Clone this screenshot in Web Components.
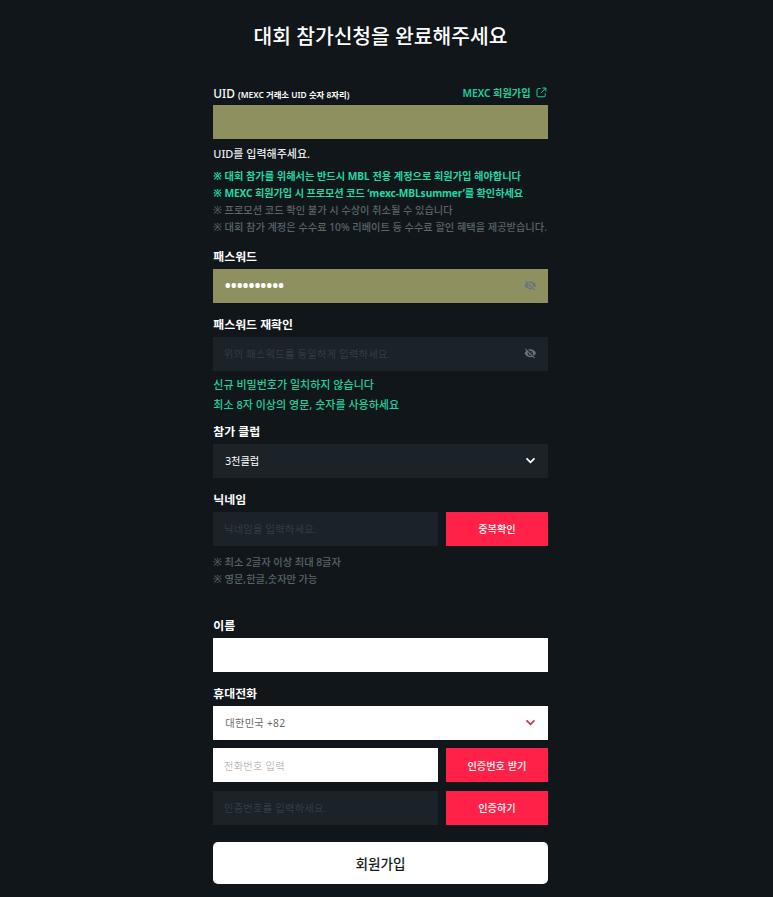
<!DOCTYPE html>
<html lang="ko">
<head>
<meta charset="utf-8">
<title>대회 참가신청</title>
<style>
    body {
        margin: 0;
        height: 897px;
        overflow: hidden;
        background: #10161a;
        color: #fff;
        font-family: "Noto Sans", "Noto Sans CJK KR", sans-serif;
    }
</style>
</head>
<body>
<signup-page></signup-page>

<script>
const ICONS = {
    external: `<svg width="11" height="11" viewBox="0 0 11 11" fill="none" stroke="currentColor" stroke-width="1"><path d="M4.6 1.6H2.2Q1 1.6 1 2.8V8.6Q1 9.8 2.2 9.8H8Q9.2 9.8 9.2 8.6V6.4M6.4 1H9.9V4.5M9.8 1.1L5 5.9"/></svg>`,
    eyeOff: `<svg width="12.5" height="12.5" viewBox="0 0 24 24" fill="currentColor"><path d="M12 7c2.76 0 5 2.24 5 5 0 .65-.13 1.26-.36 1.83l2.92 2.92c1.51-1.26 2.7-2.89 3.43-4.75-1.73-4.39-6-7.5-11-7.5-1.4 0-2.74.25-3.98.7l2.16 2.16C10.74 7.13 11.35 7 12 7zM2 4.27l2.28 2.28.46.46C3.08 8.3 1.78 10.02 1 12c1.73 4.39 6 7.5 11 7.5 1.55 0 3.03-.3 4.38-.84l.42.42L19.73 22 21 20.73 3.27 3 2 4.27zM7.53 9.8l1.55 1.55c-.05.21-.08.43-.08.65 0 1.66 1.34 3 3 3 .22 0 .44-.03.65-.08l1.55 1.55c-.67.33-1.41.53-2.2.53-2.76 0-5-2.24-5-5 0-.79.2-1.53.53-2.2zm4.31-.78l3.15 3.15.02-.16c0-1.66-1.34-3-3-3l-.17.01z"/></svg>`,
    chevron: `<svg width="11" height="11" viewBox="0 0 11 11" fill="none" stroke="currentColor" stroke-width="1.7"><path d="M1.5 3.4L5.5 7.4L9.5 3.4"/></svg>`
};

class FormField extends HTMLElement {
    constructor() {
        super();
        this.attachShadow({ mode: 'open' });
    }

    connectedCallback() {
        this.shadowRoot.innerHTML = `
            <style>
                :host { display: block; }
                .label {
                    display: flex;
                    align-items: center;
                    justify-content: space-between;
                    box-sizing: border-box;
                    height: 24px;
                    padding-bottom: 2px;
                    font-size: 11.9px;
                    font-weight: 700;
                    white-space: nowrap;
                }
                :host([latin]) .label { font-weight: 500; padding-bottom: 1px; }
                .rows {
                    display: flex;
                    flex-direction: column;
                    gap: 8.5px;
                }
            </style>
            <div class="label"><span>${this.getAttribute('label')}<slot name="hint"></slot></span><slot name="link"></slot></div>
            <div class="rows"><slot></slot></div>
        `;
    }
}

class InputBox extends HTMLElement {
    constructor() {
        super();
        this.attachShadow({ mode: 'open' });
    }

    connectedCallback() {
        const icon = this.getAttribute('icon');
        this.shadowRoot.innerHTML = `
            <style>
                :host {
                    display: flex;
                    flex: 1 0 34px;
                    align-items: center;
                    justify-content: space-between;
                    box-sizing: border-box;
                    min-height: 34px;
                    padding: 0 11.3px 0 12px;
                    background: #1b2329;
                    font-size: 10.2px;
                    white-space: nowrap;
                }
                :host([theme="filled"]) { background: #8e905f; }
                :host([theme="light"]) { background: #fff; color: #686868; letter-spacing: .3px; }
                :host([placeholder]) { color: #414a50; padding-left: 10.7px; font-weight: 300; letter-spacing: .3px; }
                :host([theme="light"][placeholder]) { color: #a0a0a0; }
                :host([masked]) {
                    height: 34px;
                    padding-left: 10.8px;
                    font-size: 20px;
                    line-height: 34px;
                    letter-spacing: -1.6px;
                }
                .icon { display: flex; color: #69747b; }
                :host([icon="chevron"]) .icon { color: #fff; }
                :host([icon="chevron"][theme="light"]) .icon { color: #d62c4c; }
            </style>
            <span class="value"><slot></slot></span>
            ${icon ? `<span class="icon">${ICONS[icon]}</span>` : ''}
        `;
    }
}

class InputRow extends HTMLElement {
    constructor() {
        super();
        this.attachShadow({ mode: 'open' });
    }

    connectedCallback() {
        this.shadowRoot.innerHTML = `
            <style>
                :host {
                    display: grid;
                    grid-template-columns: 1fr 101.3px;
                    column-gap: 8.4px;
                    height: 34px;
                }
            </style>
            <slot></slot>
        `;
    }
}

class ActionButton extends HTMLElement {
    constructor() {
        super();
        this.attachShadow({ mode: 'open' });
    }

    connectedCallback() {
        this.shadowRoot.innerHTML = `
            <style>
                :host { display: block; height: 34px; }
                :host([primary]) { height: 42.5px; }
                button {
                    display: block;
                    width: 100%;
                    height: 100%;
                    padding: 0;
                    border: none;
                    background: #ff2147;
                    color: #fff;
                    font: 500 10.2px "Noto Sans", "Noto Sans CJK KR", sans-serif;
                    cursor: pointer;
                }
                :host([primary]) button {
                    border-radius: 5px;
                    background: #fff;
                    color: #14191c;
                    font-size: 13.6px;
                }
            </style>
            <button type="button"><slot></slot></button>
        `;
    }
}

class NoteLine extends HTMLElement {
    constructor() {
        super();
        this.attachShadow({ mode: 'open' });
    }

    connectedCallback() {
        this.shadowRoot.innerHTML = `
            <style>
                :host {
                    display: block;
                    height: 17px;
                    line-height: 17px;
                    font-size: 10.22px;
                    font-weight: 500;
                    color: #5a646b;
                    white-space: nowrap;
                }
                :host([strong]) { color: #20d9a4; font-weight: 700; font-size: 10.2px; }
                :host([narrow]) { letter-spacing: -.1px; }
                :host([error]) {
                    height: 20px;
                    line-height: 20px;
                    font-size: 11.02px;
                    color: #20cf9d;
                }
                :host([message]) {
                    height: 20px;
                    line-height: 20px;
                    font-size: 11px;
                    color: #e9ebec;
                }
            </style>
            <slot></slot>
        `;
    }
}

class SignupPage extends HTMLElement {
    constructor() {
        super();
        this.attachShadow({ mode: 'open' });
    }

    getStyles() {
        return `
            <style>
                :host {
                    display: block;
                    box-sizing: border-box;
                    width: 547.6px;
                    padding: 21px 0 0 213.3px;
                }
                h1 {
                    margin: 0 0 30px;
                    font-size: 20.35px;
                    font-weight: 500;
                    line-height: 30px;
                    text-align: center;
                    white-space: nowrap;
                }
                .hint { font-size: 8.4px; font-weight: 600; }
                .link {
                    display: flex;
                    align-items: center;
                    gap: 5px;
                    padding: 0 1px 1px 0;
                    font-size: 10.2px;
                    font-weight: 600;
                    color: #20cf9d;
                }
                .message { padding-top: 5px; }
                .notes { padding: 3.5px 0 9px; }
                .errors { padding: 4.5px 0 4.5px; }
                .rules { padding: 8.5px 0 25.8px; }
                .gap { margin-bottom: 10px; }
                .submit { margin-top: 17px; }
            </style>
        `;
    }

    connectedCallback() {
        this.shadowRoot.innerHTML = `
            ${this.getStyles()}
            <h1>대회 참가신청을 완료해주세요</h1>

            <form-field label="UID " latin>
                <span slot="hint" class="hint">(MEXC 거래소 UID 숫자 8자리)</span>
                <span slot="link" class="link">MEXC 회원가입 ${ICONS.external}</span>
                <input-box theme="filled"></input-box>
            </form-field>
            <note-line message class="message">UID를 입력해주세요.</note-line>
            <div class="notes">
                <note-line strong>※ 대회 참가를 위해서는 반드시 MBL 전용 계정으로 회원가입 해야합니다</note-line>
                <note-line strong narrow>※ MEXC 회원가입 시 프로모션 코드 ‘mexc-MBLsummer’를 확인하세요</note-line>
                <note-line>※ 프로모션 코드 확인 불가 시 수상이 취소될 수 있습니다</note-line>
                <note-line>※ 대회 참가 계정은 수수료 10% 리베이트 등 수수료 할인 혜택을 제공받습니다.</note-line>
            </div>

            <form-field label="패스워드" class="gap">
                <input-box theme="filled" icon="eyeOff" masked>••••••••••</input-box>
            </form-field>

            <form-field label="패스워드 재확인">
                <input-box placeholder icon="eyeOff">위의 패스워드를 동일하게 입력하세요.</input-box>
            </form-field>
            <div class="errors">
                <note-line error>신규 비밀번호가 일치하지 않습니다</note-line>
                <note-line error>최소 8자 이상의 영문, 숫자를 사용하세요</note-line>
            </div>

            <form-field label="참가 클럽" class="gap">
                <input-box icon="chevron">3천클럽</input-box>
            </form-field>

            <form-field label="닉네임">
                <input-row>
                    <input-box placeholder>닉네임을 입력하세요.</input-box>
                    <action-button>중복확인</action-button>
                </input-row>
            </form-field>
            <div class="rules">
                <note-line>※ 최소 2글자 이상 최대 8글자</note-line>
                <note-line>※ 영문,한글,숫자만 가능</note-line>
            </div>

            <form-field label="이름" class="gap">
                <input-box theme="light"></input-box>
            </form-field>

            <form-field label="휴대전화">
                <input-box theme="light" icon="chevron">대한민국 +82</input-box>
                <input-row>
                    <input-box theme="light" placeholder>전화번호 입력</input-box>
                    <action-button>인증번호 받기</action-button>
                </input-row>
                <input-row>
                    <input-box placeholder>인증번호를 입력하세요.</input-box>
                    <action-button>인증하기</action-button>
                </input-row>
            </form-field>

            <action-button primary class="submit">회원가입</action-button>
        `;
    }
}

customElements.define('form-field', FormField);
customElements.define('input-box', InputBox);
customElements.define('input-row', InputRow);
customElements.define('action-button', ActionButton);
customElements.define('note-line', NoteLine);
customElements.define('signup-page', SignupPage);
</script>
</body>
</html>
